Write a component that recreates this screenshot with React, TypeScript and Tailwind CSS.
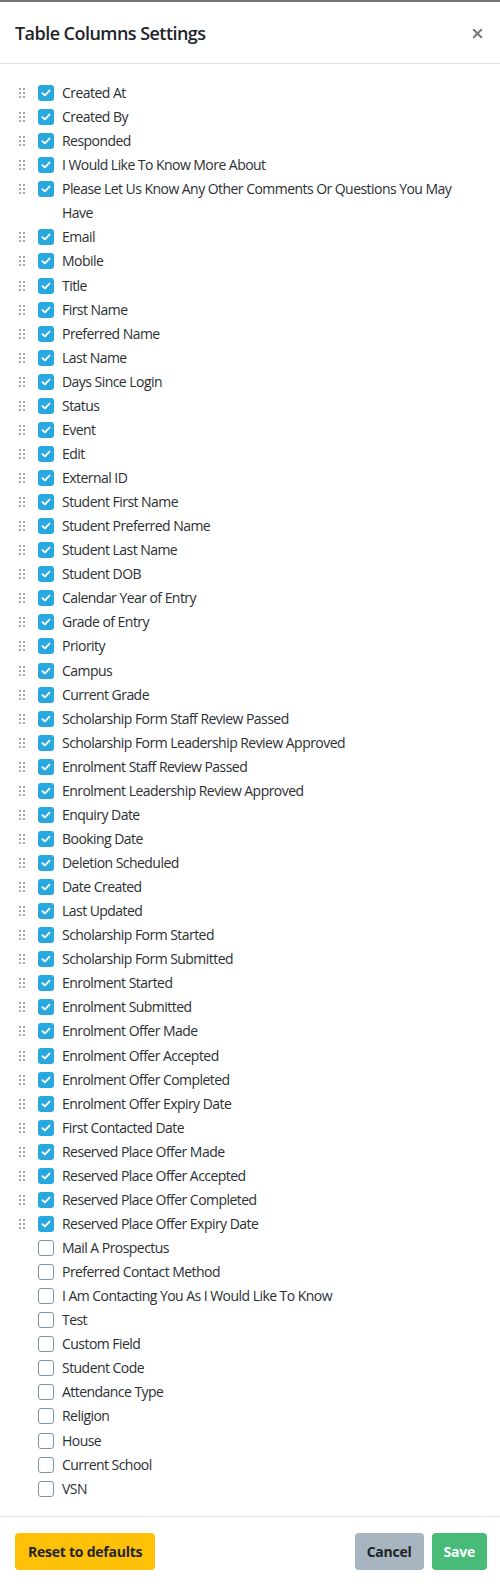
import { X } from 'lucide-react';

const checkedColumns = [
    'Created At',
    'Created By',
    'Responded',
    'I Would Like To Know More About',
    'Please Let Us Know Any Other Comments Or Questions You May Have',
    'Email',
    'Mobile',
    'Title',
    'First Name',
    'Preferred Name',
    'Last Name',
    'Days Since Login',
    'Status',
    'Event',
    'Edit',
    'External ID',
    'Student First Name',
    'Student Preferred Name',
    'Student Last Name',
    'Student DOB',
    'Calendar Year of Entry',
    'Grade of Entry',
    'Priority',
    'Campus',
    'Current Grade',
    'Scholarship Form Staff Review Passed',
    'Scholarship Form Leadership Review Approved',
    'Enrolment Staff Review Passed',
    'Enrolment Leadership Review Approved',
    'Enquiry Date',
    'Booking Date',
    'Deletion Scheduled',
    'Date Created',
    'Last Updated',
    'Scholarship Form Started',
    'Scholarship Form Submitted',
    'Enrolment Started',
    'Enrolment Submitted',
    'Enrolment Offer Made',
    'Enrolment Offer Accepted',
    'Enrolment Offer Completed',
    'Enrolment Offer Expiry Date',
    'First Contacted Date',
    'Reserved Place Offer Made',
    'Reserved Place Offer Accepted',
    'Reserved Place Offer Completed',
    'Reserved Place Offer Expiry Date',
];

const otherColumns = [
    'Mail A Prospectus',
    'Preferred Contact Method',
    'I Am Contacting You As I Would Like To Know',
    'Test',
    'Custom Field',
    'Student Code',
    'Attendance Type',
    'Religion',
    'House',
    'Current School',
    'VSN',
];

function DragHandle() {
    return (
        <svg width="6" height="10" viewBox="0 0 6 10" className="text-[#8a8a8a]">
            {[1, 5, 9].map((y) => (
                <g key={y}>
                    <circle cx="1" cy={y} r="1" fill="currentColor" />
                    <circle cx="5" cy={y} r="1" fill="currentColor" />
                </g>
            ))}
        </svg>
    );
}

function Checkbox({ checked }: { checked: boolean }) {
    if (!checked) {
        return <span className="block h-4 w-4 rounded-[3px] border border-[#7d95a6] bg-white" />;
    }
    return (
        <span className="flex h-4 w-4 items-center justify-center rounded-[3px] bg-[#27a8df]">
            <svg width="10" height="8" viewBox="0 0 10 8" fill="none">
                <path d="M1.5 4.2 L3.9 6.4 L8.5 1.6" stroke="white" strokeWidth="1.9" strokeLinecap="round" strokeLinejoin="round" />
            </svg>
        </span>
    );
}

function ColumnRow({ label, checked }: { label: string; checked: boolean }) {
    return (
        <div className="flex items-start">
            <div className="flex h-[24px] w-[14px] flex-none items-center justify-center">
                {checked && <DragHandle />}
            </div>
            <div className="ml-[9px] flex h-[24px] flex-none items-center">
                <Checkbox checked={checked} />
            </div>
            <span className="ml-[8px] pr-[10px] text-[14px] leading-[24.07px] text-[#2b2f33]">{label}</span>
        </div>
    );
}

export default function App() {
    return (
        <div className="flex w-[500px] flex-col border-t-2 border-[#777] bg-white font-['Open_Sans',sans-serif] tracking-[-0.034em]">
            <div className="flex h-[62px] items-center justify-between border-b border-[#dee2e6] pl-[15px] pr-[15px]">
                <h2 className="pt-[2px] text-[18px] font-semibold text-[#212529]">Table Columns Settings</h2>
                <button type="button" className="pt-[1px] text-[#777]" aria-label="Close">
                    <X size={15} strokeWidth={3.2} />
                </button>
            </div>

            <div className="flex flex-col pt-[17px] pb-[15px] pl-[15px] pr-[15px]">
                {checkedColumns.map((c) => (
                    <ColumnRow key={c} label={c} checked />
                ))}
                {otherColumns.map((c) => (
                    <ColumnRow key={c} label={c} checked={false} />
                ))}
            </div>

            <div className="flex items-center justify-between border-t border-[#dee2e6] pt-[16px] pb-[16px] pl-[15px] pr-[13px] tracking-[-0.015em]">
                <button type="button" className="h-[37px] rounded-[4px] bg-[#ffc107] px-[13px] text-[14px] font-bold text-[#212529]">
                    Reset to defaults
                </button>
                <div className="flex gap-[8px]">
                    <button type="button" className="h-[37px] rounded-[4px] bg-[#a6b5bf] px-[12px] text-[14px] font-bold text-[#212529]">
                        Cancel
                    </button>
                    <button type="button" className="h-[37px] rounded-[4px] bg-[#48bb78] px-[12px] text-[14px] font-bold text-white">
                        Save
                    </button>
                </div>
            </div>
        </div>
    );
}
